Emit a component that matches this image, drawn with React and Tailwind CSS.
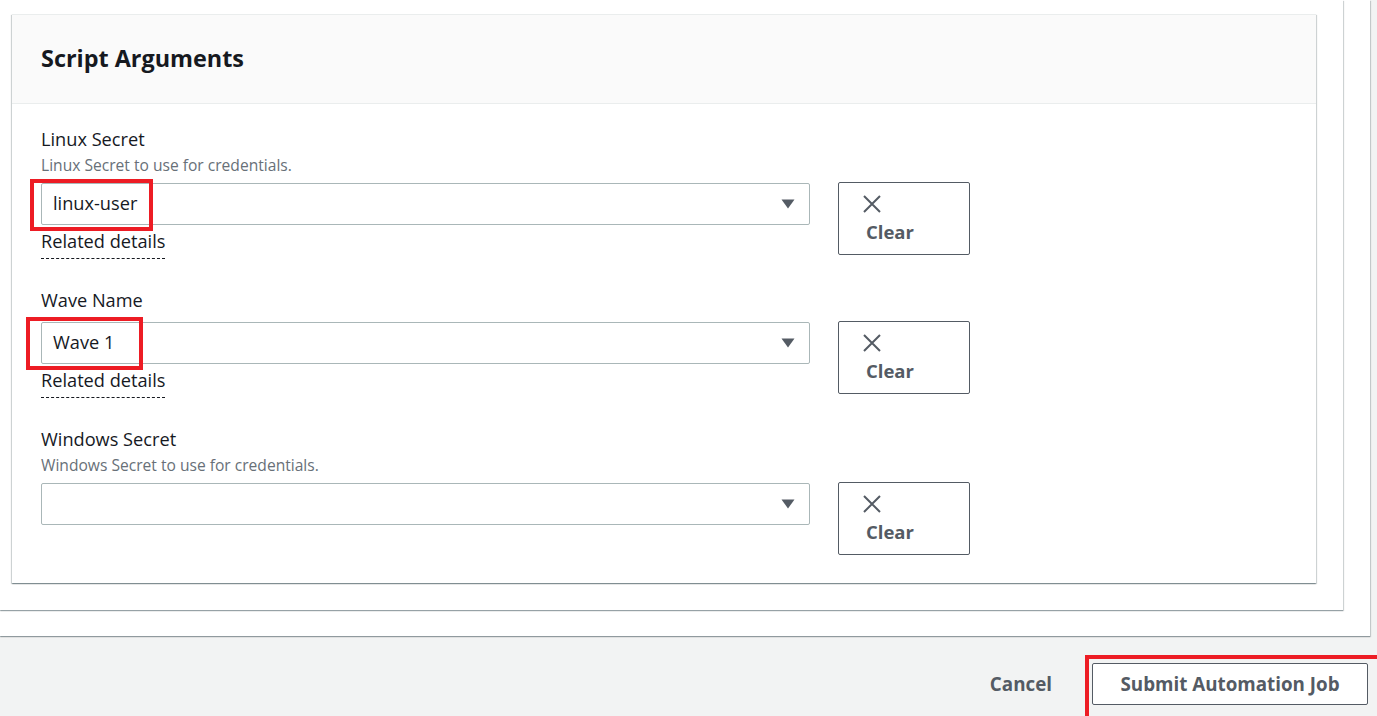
import React from "react";

const Caret = () => (
  <svg width="14" height="10" viewBox="0 0 14 10" className="shrink-0">
    <path d="M0.5 0.5 H13.5 L7 9.5 Z" fill="#545b64" />
  </svg>
);

const XIcon = () => (
  <svg width="20" height="20" viewBox="0 0 20 20">
    <path d="M2 2 L18 18 M18 2 L2 18" stroke="#545b64" strokeWidth="2" fill="none" />
  </svg>
);

function ClearButton() {
  return (
    <button className="ml-[28px] mt-[-1px] w-[132px] h-[73px] shrink-0 border border-[#545b64] rounded-[2px] bg-white flex flex-col items-start pl-[23px] pt-[11px]">
      <XIcon />
      <span className="ml-[4px] mt-[6px] text-[18.5px] leading-[24px] font-bold text-[#545b64]">Clear</span>
    </button>
  );
}

function Field({ label, description, value, related, highlight }) {
  return (
    <div className="flex flex-col">
      <div className="text-[18.2px] leading-[22px] text-[#16191f]">{label}</div>
      {description ? (
        <div className="mt-[6px] text-[15.6px] leading-[18px] text-[#687078]">{description}</div>
      ) : null}
      <div className={"flex items-start " + (description ? "mt-[9px]" : "mt-[11px]")}>
        <div className="w-[769px] flex flex-col items-start">
          <div className="relative w-full h-[42px] border border-[#aab7b8] rounded-[2px] bg-white flex items-center justify-between pl-[11px] pr-[14px]">
            <span className="text-[18.2px] text-[#16191f]">{value}</span>
            <Caret />
            {highlight === "linux" ? (
              <div className="absolute left-[-12px] top-[-5px] w-[123px] h-[52px] border-[4px] border-[#ed1c24]" />
            ) : null}
            {highlight === "wave" ? (
              <div className="absolute left-[-16px] top-[-6px] w-[117px] h-[53px] border-[4px] border-[#ed1c24]" />
            ) : null}
          </div>
          {related ? (
            <span className="mt-[4px] text-[18.2px] leading-[24px] pb-[5px] text-[#16191f] border-b border-dashed border-[#16191f]">
              Related details
            </span>
          ) : null}
        </div>
        <ClearButton />
      </div>
    </div>
  );
}

export default function App() {
  return (
    <div className="min-h-screen w-full bg-[#f2f3f3] font-['Open_Sans',sans-serif] overflow-hidden">
      {/* outer panel */}
      <div className="w-[1370px] bg-white pb-[26px] shadow-[0_1px_1px_0_rgba(0,28,36,0.3),1px_1px_1px_0_rgba(0,28,36,0.15)]">
        {/* middle panel */}
        <div className="w-[1343px] bg-white pt-[14px] pl-[12px] pb-[27px] shadow-[0_1px_1px_0_rgba(0,28,36,0.3),1px_1px_1px_0_rgba(0,28,36,0.15)]">
          {/* container card */}
          <div className="w-[1304px] bg-white border-t border-[#eaeded] shadow-[0_1px_1px_0_rgba(0,28,36,0.3),1px_1px_1px_0_rgba(0,28,36,0.15),-1px_1px_1px_0_rgba(0,28,36,0.15)]">
            <div className="h-[89px] bg-[#fafafa] border-b border-[#eaeded] flex items-center px-[29px]">
              <h2 className="text-[23.4px] leading-[30px] font-bold text-[#16191f] mt-[-2px]">Script Arguments</h2>
            </div>
            <div className="px-[29px] pt-[24px] pb-[28px] flex flex-col gap-[30px]">
              <Field
                label="Linux Secret"
                description="Linux Secret to use for credentials."
                value="linux-user"
                related
                highlight="linux"
              />
              <Field label="Wave Name" value="Wave 1" related highlight="wave" />
              <Field label="Windows Secret" description="Windows Secret to use for credentials." value="" />
            </div>
          </div>
        </div>
      </div>

      {/* footer actions */}
      <div className="flex items-center justify-end pt-[27px] pr-[9px]">
        <button className="text-[18.8px] font-bold text-[#545b64] mr-[40px]">Cancel</button>
        <div className="relative">
          <button className="w-[276px] h-[42px] border border-[#545b64] rounded-[2px] bg-white text-[18.8px] font-bold text-[#545b64]">
            Submit Automation Job
          </button>
          <div className="absolute left-[-7px] top-[-8px] w-[300px] h-[70px] border-[4px] border-[#ed1c24]" />
        </div>
      </div>
    </div>
  );
}
